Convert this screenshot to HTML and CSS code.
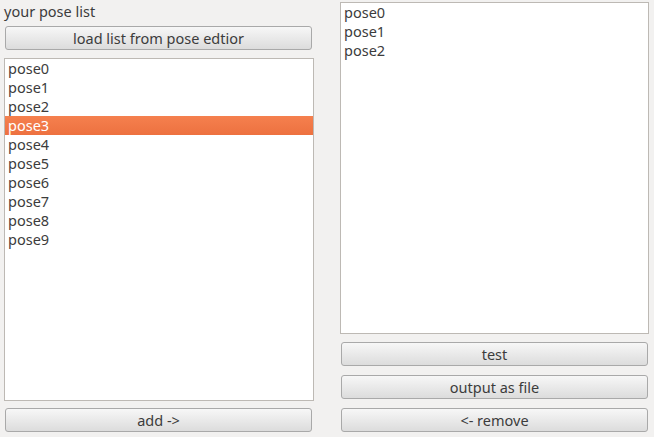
FILE: index.html
```html
<!DOCTYPE html>
<html>
<head>
<meta charset="utf-8">
<link rel="stylesheet" href="styles.css">
</head>
<body>
<div class="app">
  <div class="col left">
    <div class="label">your pose list</div>
    <button class="btn top-btn">load list from pose edtior</button>
    <ul class="list">
      <li>pose0</li>
      <li>pose1</li>
      <li>pose2</li>
      <li class="sel">pose3</li>
      <li>pose4</li>
      <li>pose5</li>
      <li>pose6</li>
      <li>pose7</li>
      <li>pose8</li>
      <li>pose9</li>
    </ul>
    <button class="btn">add -&gt;</button>
  </div>
  <div class="col right">
    <ul class="list">
      <li>pose0</li>
      <li>pose1</li>
      <li>pose2</li>
    </ul>
    <div class="btns">
      <button class="btn">test</button>
      <button class="btn">output as file</button>
      <button class="btn">&lt;- remove</button>
    </div>
  </div>
</div>
</body>
</html>
```
FILE: styles.css
```css
html, body {
  margin: 0;
  padding: 0;
  background: #f2f1f0;
  font-family: "Noto Sans", "Open Sans", sans-serif;
  font-size: 14.5px;
  color: #3c3c3c;
}
.app {
  display: grid;
  grid-template-columns: 310px 309px;
  column-gap: 26px;
  padding-left: 4px;
  height: 437px;
  box-sizing: border-box;
}
.col {
  display: flex;
  flex-direction: column;
  min-height: 0;
}
.left {
  padding-bottom: 5px;
}
.right {
  padding-top: 2px;
  padding-bottom: 5px;
}
.label {
  height: 22px;
  line-height: 22px;
  margin-bottom: 4px;
  white-space: nowrap;
}
.btn {
  height: 24px;
  box-sizing: border-box;
  border: 1px solid #a9a9a9;
  border-radius: 3px;
  background: linear-gradient(#f7f7f7, #dcdcdc);
  font-family: inherit;
  font-size: 14.5px;
  color: #3c3c3c;
  padding: 0;
  margin: 0 2px 0 1px;
  line-height: 20px;
}
.top-btn {
  margin-bottom: 8px;
}
.list {
  list-style: none;
  margin: 0;
  padding: 0;
  background: #fff;
  border: 1px solid #bdb9b4;
  flex: 1;
  min-height: 0;
  box-sizing: border-box;
}
.left .list {
  margin-bottom: 7px;
}
.list li {
  height: 19px;
  line-height: 19px;
  padding-left: 3px;
  white-space: nowrap;
}
.list li.sel {
  background: linear-gradient(#f5804e, #ed7140);
  color: #ffffff;
}
.right .list {
  margin-bottom: 8px;
}
.btns {
  display: flex;
  flex-direction: column;
  gap: 9px;
}
.right .btn {
  margin: 0 1px 0 1px;
}
```
